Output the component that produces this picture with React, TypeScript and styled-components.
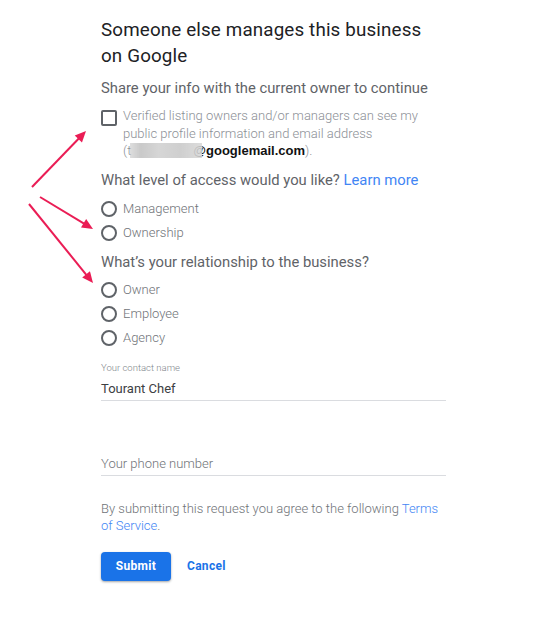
import React from "react";
import styled, { createGlobalStyle } from "styled-components";

const Global = createGlobalStyle`
  html, body { margin: 0; padding: 0; background: #ffffff; }
  body { font-family: Roboto, "Noto Sans", Arial, sans-serif; }
`;

const Page = styled.div`
  position: relative;
  width: 538px;
  height: 626px;
  padding: 17px 0 0 101px;
  box-sizing: border-box;
`;

const Form = styled.div`
  width: 345px;
  display: flex;
  flex-direction: column;
`;

const Title = styled.h1`
  margin: 0;
  font-family: Roboto, Arial, sans-serif;
  font-size: 18.8px;
  line-height: 26px;
  font-weight: 400;
  color: #202124;
  letter-spacing: 0.15px;
`;

const Question = styled.div<{ $mt: number }>`
  margin-top: ${(p) => p.$mt}px;
  font-size: 14.8px;
  line-height: 20px;
  color: #5f6368;
`;

const Link = styled.a`
  color: #4285f4;
  text-decoration: none;
`;

const CheckRow = styled.label`
  margin-top: 9px;
  display: flex;
  align-items: flex-start;
  gap: 6px;
`;

const Box = styled.span`
  flex: none;
  margin-top: 2.5px;
  width: 16px;
  height: 16px;
  box-sizing: border-box;
  border: 2px solid #5f6368;
  border-radius: 2px;
`;

const CheckText = styled.span`
  font-size: 13px;
  font-weight: 300;
  line-height: 17.5px;
  color: #8c9096;
`;

const NoWrap = styled.span`
  white-space: nowrap;
`;

const Blur = styled.span`
  position: relative;
  z-index: 1;
  display: inline-block;
  vertical-align: -3px;
  width: 72px;
  height: 15px;
  margin-left: -1px;
  margin-right: -9px;
  background: linear-gradient(
    90deg,
    rgba(200, 200, 200, 0.6) 0%,
    #c9c9c9 15%,
    #d6d6d6 40%,
    #cfcfcf 70%,
    rgba(215, 215, 215, 0.85) 100%
  );
  filter: blur(0.6px);
`;

const Email = styled.b`
  font-family: "Liberation Sans", Arial, sans-serif;
  font-weight: 700;
  font-size: 13px;
  color: #111111;
`;

const RadioGroup = styled.div<{ $mt: number }>`
  margin-top: ${(p) => p.$mt}px;
  display: flex;
  flex-direction: column;
`;

const RadioRow = styled.label`
  height: 24px;
  display: flex;
  align-items: center;
  gap: 6px;
`;

const Circle = styled.span`
  flex: none;
  width: 16px;
  height: 16px;
  box-sizing: border-box;
  border: 2px solid #5f6368;
  border-radius: 50%;
`;

const RadioLabel = styled.span`
  font-size: 13px;
  font-weight: 300;
  color: #6f7378;
`;

const SmallLabel = styled.div`
  margin-top: 12px;
  font-size: 9.5px;
  font-weight: 300;
  line-height: 12px;
  color: #80868b;
`;

const Field = styled.div<{ $mt: number; $muted?: boolean }>`
  margin-top: ${(p) => p.$mt}px;
  padding-bottom: 1px;
  font-size: 13px;
  font-weight: ${(p) => (p.$muted ? 300 : 400)};
  line-height: 20px;
  color: ${(p) => (p.$muted ? "#6f7378" : "#3c4043")};
  border-bottom: 1px solid #dadce0;
`;

const Terms = styled.p`
  margin: 24px 0 0;
  font-size: 13px;
  font-weight: 300;
  line-height: 17px;
  color: #6f7378;
`;

const Actions = styled.div`
  margin-top: 18px;
  display: flex;
  align-items: center;
  gap: 16px;
`;

const Primary = styled.button`
  width: 70px;
  height: 29px;
  border: none;
  border-radius: 4px;
  background: #1a73e8;
  color: #ffffff;
  font-family: Roboto, Arial, sans-serif;
  font-weight: 700;
  font-size: 12px;
  letter-spacing: 0.3px;
  box-shadow: 0 1px 2px rgba(60, 64, 67, 0.35), 0 1px 3px rgba(60, 64, 67, 0.15);
`;

const TextButton = styled.button`
  border: none;
  background: none;
  padding: 0;
  color: #1a73e8;
  font-family: Roboto, Arial, sans-serif;
  font-weight: 700;
  font-size: 12px;
  letter-spacing: 0.3px;
`;

const Annotations = styled.svg`
  position: absolute;
  left: 0;
  top: 0;
  pointer-events: none;
`;

const arrowColor = "#ea1d55";

function Arrow({ x1, y1, x2, y2 }: { x1: number; y1: number; x2: number; y2: number }) {
  const dx = x2 - x1;
  const dy = y2 - y1;
  const len = Math.hypot(dx, dy);
  const ux = dx / len;
  const uy = dy / len;
  const head = 11;
  const half = 5;
  const bx = x2 - ux * head;
  const by = y2 - uy * head;
  const px = -uy;
  const py = ux;
  return (
    <g>
      <line x1={x1} y1={y1} x2={bx + ux * 2} y2={by + uy * 2} stroke={arrowColor} strokeWidth={2} />
      <polygon
        points={`${x2},${y2} ${bx + px * half},${by + py * half} ${bx - px * half},${by - py * half}`}
        fill={arrowColor}
      />
    </g>
  );
}

const Radio = ({ label }: { label: string }) => (
  <RadioRow>
    <Circle />
    <RadioLabel>{label}</RadioLabel>
  </RadioRow>
);

export default function App() {
  return (
    <>
      <Global />
      <Page>
        <Form>
          <Title>
            Someone else manages this business
            <br />
            on Google
          </Title>
          <Question $mt={9}>Share your info with the current owner to continue</Question>
          <CheckRow>
            <Box />
            <CheckText>
              Verified listing owners and/or managers can see my public profile information and email address{" "}
              <NoWrap>
                (t<Blur />
                <Email>@googlemail.com</Email>).
              </NoWrap>
            </CheckText>
          </CheckRow>
          <Question $mt={10}>
            What level of access would you like? <Link>Learn more</Link>
          </Question>
          <RadioGroup $mt={7}>
            <Radio label="Management" />
            <Radio label="Ownership" />
          </RadioGroup>
          <Question $mt={7}>What’s your relationship to the business?</Question>
          <RadioGroup $mt={6}>
            <Radio label="Owner" />
            <Radio label="Employee" />
            <Radio label="Agency" />
          </RadioGroup>
          <SmallLabel>Your contact name</SmallLabel>
          <Field $mt={5}>Tourant Chef</Field>
          <Field $mt={53} $muted>
            Your phone number
          </Field>
          <Terms>
            By submitting this request you agree to the following <Link>Terms of Service</Link>.
          </Terms>
          <Actions>
            <Primary>Submit</Primary>
            <TextButton>Cancel</TextButton>
          </Actions>
        </Form>
        <Annotations width={538} height={626} viewBox="0 0 538 626">
          <Arrow x1={32} y1={187} x2={86} y2={131} />
          <Arrow x1={40} y1={197} x2={93} y2={229} />
          <Arrow x1={29} y1={204} x2={93} y2={283} />
        </Annotations>
      </Page>
    </>
  );
}
